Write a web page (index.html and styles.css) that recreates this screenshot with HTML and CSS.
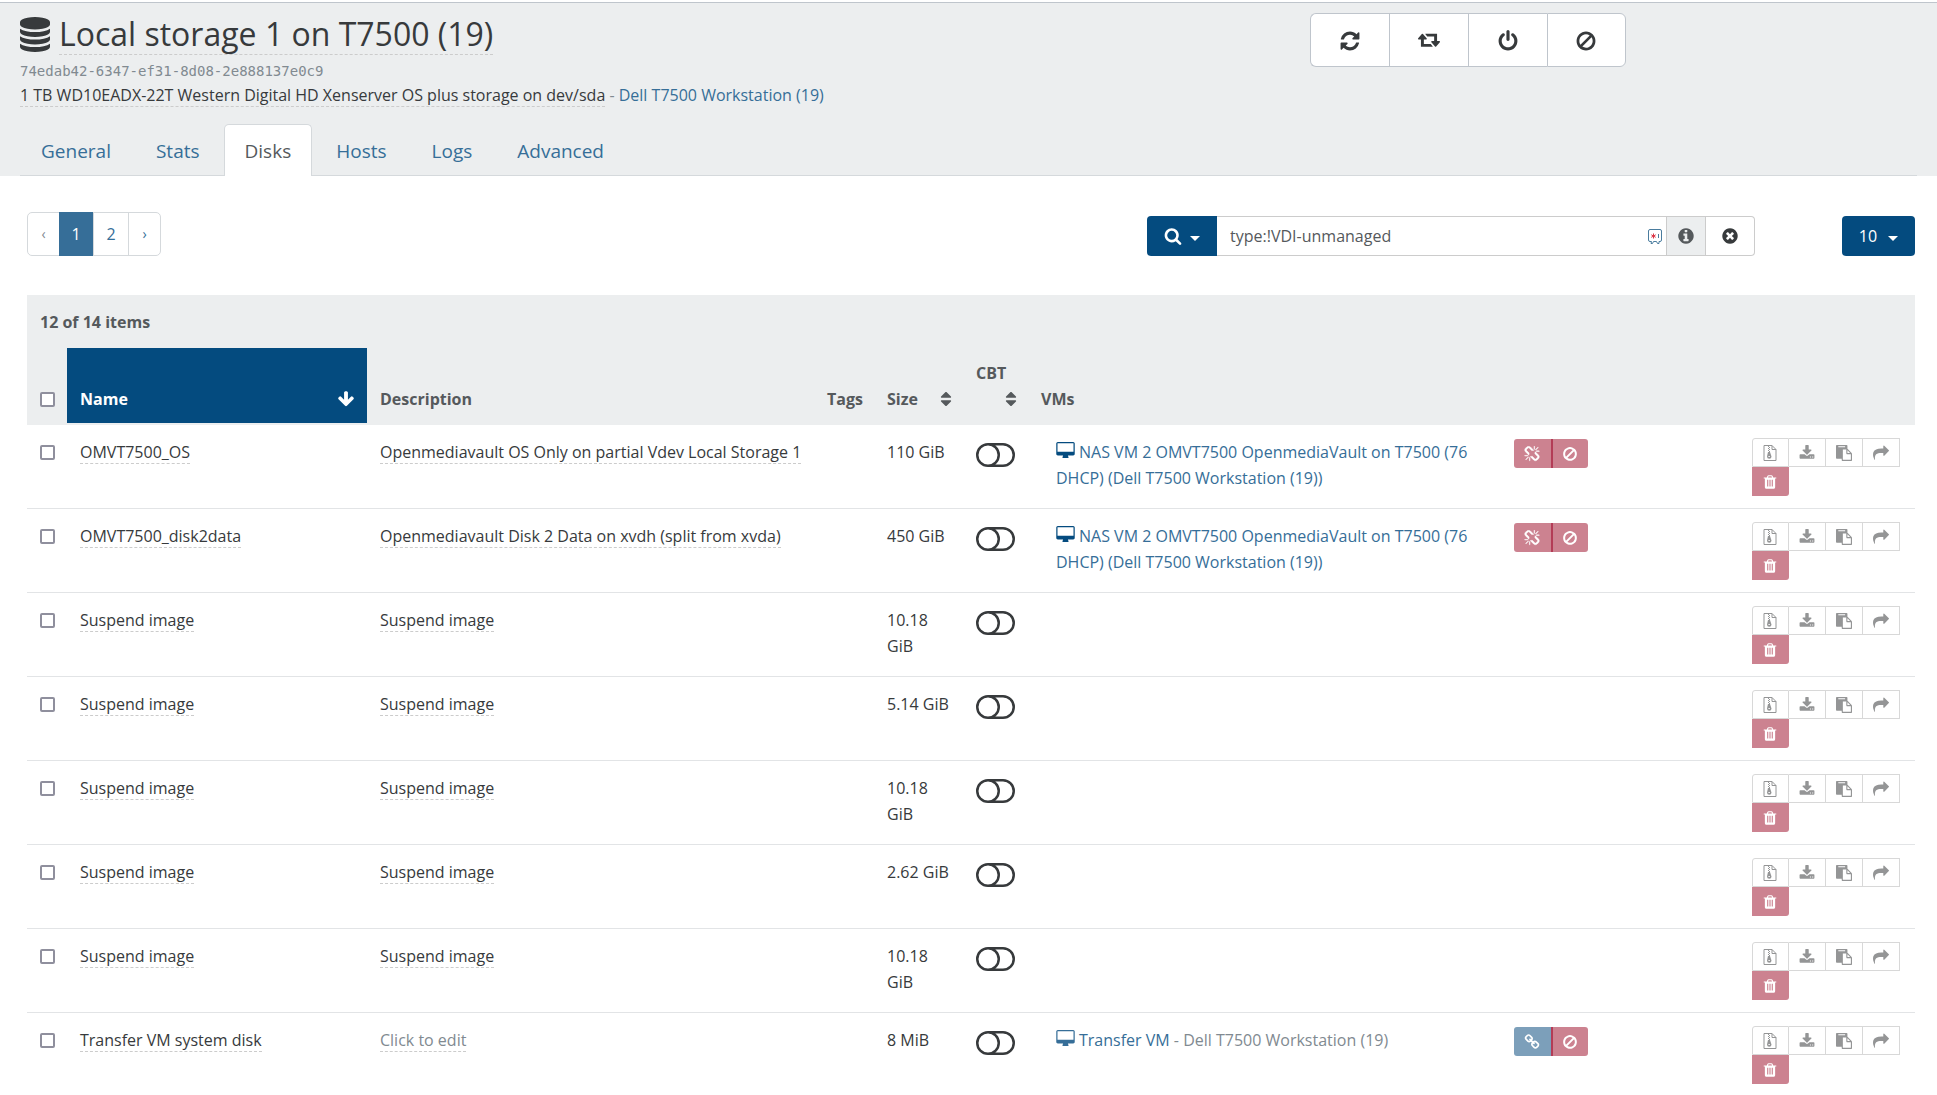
FILE: index.html
```
<!DOCTYPE html>
<html lang="en">
<head>
<meta charset="utf-8">
<meta name="viewport" content="width=device-width, initial-scale=1">
<title>Local storage 1 on T7500 (19)</title>
<link rel="stylesheet" href="styles.css">
</head>
<body>
<svg class="sprite" aria-hidden="true">
  <symbol id="database" viewBox="128 0 1536 1792"><path d="M896 768q237 0 443-43t325-127v170q0 69-103 128t-280 93.500-385 34.500-385-34.500-280-93.500-103-128v-170q119 84 325 127t443 43zm0 768q237 0 443-43t325-127v170q0 69-103 128t-280 93.500-385 34.500-385-34.500-280-93.500-103-128v-170q119 84 325 127t443 43zm0-384q237 0 443-43t325-127v170q0 69-103 128t-280 93.500-385 34.500-385-34.500-280-93.500-103-128v-170q119 84 325 127t443 43zm0-1152q208 0 385 34.500t280 93.500 103 128v128q0 69-103 128t-280 93.500-385 34.500-385-34.500-280-93.500-103-128v-128q0-69 103-128t280-93.500 385-34.500z"/></symbol>
  <symbol id="refresh" viewBox="0 0 1792 1792"><path d="M1639 1056q0 5-1 7-64 268-268 434.500t-478 166.500q-146 0-282.500-55t-243.500-157l-129 129q-19 19-45 19t-45-19-19-45v-448q0-26 19-45t45-19h448q26 0 45 19t19 45-19 45l-137 137q71 66 161 102t187 36q134 0 250-65t186-179q11-17 53-117 8-23 30-23h192q13 0 22.500 9.500t9.500 22.500zm25-800v448q0 26-19 45t-45 19h-448q-26 0-45-19t-19-45 19-45l138-138q-148-137-349-137-134 0-250 65t-186 179q-11 17-53 117-8 23-30 23h-199q-13 0-22.500-9.500t-9.500-22.500v-7q65-268 270-434.500t480-166.500q146 0 284 55.500t245 156.500l130-129q19-19 45-19t45 19 19 45z"/></symbol>
  <symbol id="retweet" viewBox="0 128 1920 1792"><path d="M1280 1504q0 13-9.500 22.500t-22.500 9.500h-960q-8 0-13.500-2t-9-7-5.500-8-3-11.500-1-11.500v-600h-192q-26 0-45-19t-19-45q0-24 15-41l320-384q19-22 49-22t49 22l320 384q15 17 15 41 0 26-19 45t-45 19h-192v384h576q16 0 25 11l160 192q7 10 7 21zm640-416q0 24-15 41l-320 384q-20 23-49 23t-49-23l-320-384q-15-17-15-41 0-26 19-45t45-19h192v-384h-576q-16 0-25-12l-160-192q-7-9-7-20 0-13 9.500-22.500t22.500-9.500h960q8 0 13.500 2t9 7 5.500 8 3 11.500 1 11.500v600h192q26 0 45 19t19 45z"/></symbol>
  <symbol id="power" viewBox="0 0 1792 1792"><path d="M1664 896q0 156-61 298t-164 245-245 164-298 61-298-61-245-164-164-245-61-298q0-182 80.500-343t226.500-270q43-32 95.500-25t83.500 50q32 42 24.500 94.500t-49.500 84.500q-98 74-151.500 181t-53.500 228q0 104 40.500 198.500t109.500 163.500 163.500 109.500 198.500 40.500 198.500-40.500 163.500-109.500 109.500-163.500 40.500-198.500q0-121-53.500-228t-151.500-181q-42-32-49.500-84.500t24.500-94.500q31-43 84-50t95 25q146 109 226.500 270t80.500 343zm-640-768v640q0 52-38 90t-90 38-90-38-38-90v-640q0-52 38-90t90-38 90 38 38 90z"/></symbol>
  <symbol id="ban" viewBox="0 0 1792 1792"><path d="M1440 893q0-161-87-295l-754 753q137 89 297 89 111 0 211.500-43.500t173.500-116.500 116-174.500 43-212.500zm-999 299l755-754q-135-91-300-91-148 0-273 73t-198 199-73 274q0 162 89 299zm1223-299q0 157-61 300t-163.500 246-245 164-298.500 61-298.500-61-245-164-163.500-246-61-300 61-299.500 163.500-245.500 245-164 298.500-61 298.500 61 245 164 163.500 245.500 61 299.500z"/></symbol>
  <symbol id="search" viewBox="0 0 1792 1792"><path d="M1216 832q0-185-131.500-316.500t-316.500-131.500-316.500 131.500-131.500 316.500 131.500 316.500 316.500 131.500 316.500-131.500 131.500-316.500zm512 832q0 52-38 90t-90 38q-54 0-90-38l-343-342q-179 124-399 124-143 0-273.500-55.500t-225-150-150-225-55.500-273.500 55.500-273.500 150-225 225-150 273.500-55.500 273.500 55.500 225 150 150 225 55.500 273.500q0 220-124 399l343 343q37 37 37 90z"/></symbol>
  <symbol id="info" viewBox="0 0 1792 1792"><path d="M1152 1376v-160q0-14-9-23t-23-9h-96v-512q0-14-9-23t-23-9h-320q-14 0-23 9t-9 23v160q0 14 9 23t23 9h96v320h-96q-14 0-23 9t-9 23v160q0 14 9 23t23 9h448q14 0 23-9t9-23zm-128-896v-160q0-14-9-23t-23-9h-192q-14 0-23 9t-9 23v160q0 14 9 23t23 9h192q14 0 23-9t9-23zm640 416q0 209-103 385.500t-279.500 279.500-385.500 103-385.500-103-279.500-279.500-103-385.500 103-385.500 279.500-279.500 385.500-103 385.500 103 279.500 279.500 103 385.500z"/></symbol>
  <symbol id="clear" viewBox="0 0 1792 1792"><path d="M1277 1122q0-26-19-45l-181-181 181-181q19-19 19-45 0-27-19-46l-90-90q-19-19-46-19-26 0-45 19l-181 181-181-181q-19-19-45-19-27 0-46 19l-90 90q-19 19-19 46 0 26 19 45l181 181-181 181q-19 19-19 45 0 27 19 46l90 90q19 19 46 19 26 0 45-19l181-181 181 181q19 19 45 19 27 0 46-19l90-90q19-19 19-46zm387-226q0 209-103 385.500t-279.500 279.500-385.500 103-385.500-103-279.500-279.500-103-385.500 103-385.500 279.500-279.500 385.500-103 385.500 103 279.500 279.500 103 385.500z"/></symbol>
  <symbol id="caret" viewBox="0 0 10 5"><path d="M0 0h10L5 5z"/></symbol>
  <symbol id="arrow-down" viewBox="0 0 1792 1792"><path d="M1675 832q0 53-37 90l-651 652q-39 37-91 37-53 0-90-37l-651-652q-38-36-38-90 0-53 38-91l74-75q39-37 91-37 53 0 90 37l294 294v-704q0-52 38-90t90-38h128q52 0 90 38t38 90v704l294-294q37-37 90-37 52 0 91 37l75 75q37 39 37 91z"/></symbol>
  <symbol id="sort" viewBox="0 0 1792 1792"><path d="M1408 1088q0 26-19 45l-448 448q-19 19-45 19t-45-19l-448-448q-19-19-19-45t19-45 45-19h896q26 0 45 19t19 45zm0-384q0 26-19 45t-45 19h-896q-26 0-45-19t-19-45 19-45l448-448q19-19 45-19t45 19l448 448q19 19 19 45z"/></symbol>
  <symbol id="desktop" viewBox="0 0 1920 1664"><path d="M1792 992v-832q0-13-9.500-22.500t-22.500-9.500h-1600q-13 0-22.500 9.500t-9.500 22.500v832q0 13 9.500 22.500t22.500 9.500h1600q13 0 22.500-9.500t9.500-22.500zm128-832v1088q0 66-47 113t-113 47h-544q0 37 16 77.500t32 71 16 43.500q0 26-19 45t-45 19h-512q-26 0-45-19t-19-45q0-14 16-44t32-70 16-78h-544q-66 0-113-47t-47-113v-1088q0-66 47-113t113-47h1600q66 0 113 47t47 113z"/></symbol>
  <symbol id="toggle" viewBox="0 0 39 24"><path d="M12 1.250h15a10.750 10.750 0 0 1 0 21.500H12a10.750 10.750 0 0 1 0-21.500a10.750 10.750 0 0 1 0 21.500" fill="none" stroke="currentColor" stroke-width="2.500"/></symbol>
  <symbol id="unlink" viewBox="0 0 1792 1792"><path d="M503 1271l-256 256q-10 9-23 9-12 0-23-9-9-10-9-23t9-23l256-256q10-9 23-9t23 9q9 10 9 23t-9 23zm169 41v320q0 14-9 23t-23 9-23-9-9-23v-320q0-14 9-23t23-9 23 9 9 23zm-224-224q0 14-9 23t-23 9h-320q-14 0-23-9t-9-23 9-23 23-9h320q14 0 23 9t9 23zm1264 128q0 120-85 203l-147 146q-83 83-203 83-121 0-204-85l-334-335q-21-21-42-56l239-18 273 274q28 28 68 28.500t68-27.500l147-146q28-28 28-67 0-40-28-68l-274-275 18-239q35 21 56 42l336 336q84 86 84 204zm-617-724l-239 18-273-274q-28-28-68-28-39 0-68 27l-147 146q-28 28-28 67 0 40 28 68l274 274-18 240q-35-21-56-42l-336-336q-84-86-84-204 0-120 85-203l147-146q83-83 203-83 121 0 204 85l334 335q21 21 42 56zm633 84q0 14-9 23t-23 9h-320q-14 0-23-9t-9-23 9-23 23-9h320q14 0 23 9t9 23zm-544-544v320q0 14-9 23t-23 9-23-9-9-23v-320q0-14 9-23t23-9 23 9 9 23zm407 151l-256 256q-11 9-23 9t-23-9q-9-10-9-23t9-23l256-256q10-9 23-9t23 9q9 10 9 23t-9 23z" stroke="currentColor" stroke-width="50"/></symbol>
  <symbol id="link" viewBox="0 0 1792 1792"><path d="M1520 1216q0-40-28-68l-208-208q-28-28-68-28-42 0-72 32 3 3 19 18.500t21.500 21.500 15 19 13 25.500 3.500 27.500q0 40-28 68t-68 28q-15 0-27.500-3.500t-25.500-13-19-15-21.500-21.500-18.500-19q-33 31-33 73 0 40 28 68l206 207q27 27 68 27 40 0 68-26l147-146q28-28 28-67zm-703-705q0-40-28-68l-206-207q-28-28-68-28-39 0-68 27l-147 146q-28 28-28 67 0 40 28 68l208 208q27 27 68 27 42 0 72-31-3-3-19-18.500t-21.500-21.500-15-19-13-25.500-3.500-27.500q0-40 28-68t68-28q15 0 27.500 3.500t25.500 13 19 15 21.500 21.500 18.500 19q33-31 33-73zm895 705q0 120-85 203l-147 146q-83 83-203 83-121 0-204-85l-206-207q-83-83-83-203 0-123 88-209l-88-88q-86 88-208 88-120 0-204-84l-208-208q-84-84-84-204t85-203l147-146q83-83 203-83 121 0 204 85l206 207q83 83 83 203 0 123-88 209l88 88q86-88 208-88 120 0 204 84l208 208q84 84 84 204z"/></symbol>
  <symbol id="archive" viewBox="0 0 14 16"><path d="M1 .5h8l4 4v11H1zM9 .5v4h4" fill="none" stroke="currentColor"/><path d="M5 1h1v1H5zM6 2h1v1H6zM5 3h1v1H5zM6 4h1v1H6zM5 5h1v1H5zM6 6h1v1H6zM5 7h2l1.500 4.500a2 2 0 0 1-4.500 0zM5.200 11a.8.8 0 1 0 1.900 0z" fill-rule="evenodd"/></symbol>
  <symbol id="download" viewBox="0 0 1792 1792"><path d="M1344 1344q0-26-19-45t-45-19-45 19-19 45 19 45 45 19 45-19 19-45zm256 0q0-26-19-45t-45-19-45 19-19 45 19 45 45 19 45-19 19-45zm128-224v320q0 40-28 68t-68 28h-1472q-40 0-68-28t-28-68v-320q0-40 28-68t68-28h465l135 136q58 56 136 56t136-56l136-136h464q40 0 68 28t28 68zm-325-569q17 41-14 70l-448 448q-18 19-45 19t-45-19l-448-448q-31-29-14-70 17-39 59-39h256v-448q0-26 19-45t45-19h256q26 0 45 19t19 45v448h256q42 0 59 39z"/></symbol>
  <symbol id="paste" viewBox="0 0 1792 1792"><path d="M768 1664h896v-640h-416q-40 0-68-28t-28-68v-416h-384v1152zm256-1440v-64q0-13-9.500-22.500t-22.500-9.500h-704q-13 0-22.500 9.500t-9.500 22.500v64q0 13 9.500 22.500t22.500 9.500h704q13 0 22.500-9.500t9.500-22.500zm256 672h299l-299-299v299zm512 128v672q0 40-28 68t-68 28h-960q-40 0-68-28t-28-68v-160h-544q-40 0-68-28t-28-68v-1344q0-40 28-68t68-28h1088q40 0 68 28t28 68v328q21 13 36 28l408 408q28 28 48 76t20 88z"/></symbol>
  <symbol id="share" viewBox="0 0 1792 1792"><path d="M1792 640q0 26-19 45l-512 512q-19 19-45 19t-45-19-19-45v-256h-224q-98 0-175.500 6t-154 21.500-133 42.500-105.500 69.500-80 101-48.500 138.500-17.500 181q0 55 5 123 0 6 2.500 23.500t2.500 26.500q0 15-8.500 25t-23.500 10q-16 0-28-17-7-9-13-22t-13.500-30-10.500-24q-127-285-127-451 0-199 53-333 162-403 875-403h224v-256q0-26 19-45t45-19 45 19l512 512q19 19 19 45z"/></symbol>
  <symbol id="trash" viewBox="0 0 1792 1792"><path d="M704 1376v-704q0-14-9-23t-23-9h-64q-14 0-23 9t-9 23v704q0 14 9 23t23 9h64q14 0 23-9t9-23zm256 0v-704q0-14-9-23t-23-9h-64q-14 0-23 9t-9 23v704q0 14 9 23t23 9h64q14 0 23-9t9-23zm256 0v-704q0-14-9-23t-23-9h-64q-14 0-23 9t-9 23v704q0 14 9 23t23 9h64q14 0 23-9t9-23zm-544-992h448l-48-117q-7-9-17-11h-317q-10 2-17 11zm928 32v64q0 14-9 23t-23 9h-96v948q0 83-47 143.500t-113 60.500h-832q-66 0-113-58.500t-47-141.500v-952h-96q-14 0-23-9t-9-23v-64q0-14 9-23t23-9h309l70-167q15-37 54-63t79-26h320q40 0 79 26t54 63l70 167h309q14 0 23 9t9 23z"/></symbol>
  <symbol id="vault" viewBox="0 0 14 15"><path d="M3.500 12.500H2A1.500 1.500 0 0 1 .5 11V2A1.500 1.500 0 0 1 2 .5h10A1.500 1.500 0 0 1 13.500 2v9a1.500 1.500 0 0 1-1.500 1.500h-1v2H9.500l-1-2h-3l-1 2H3zM10.500 5v4" fill="none" stroke="#4a7c9e"/><path d="M5.500 4.500v5M3.300 5.800l4.400 2.500M7.700 5.800L3.300 8.300" stroke="#dc3545"/></symbol>
</svg>

<header class="page-header">
  <div class="header-top">
    <div>
      <h1 class="title"><svg class="title-icon"><use href="#database"/></svg><span class="editable">Local storage 1 on T7500 (19)</span></h1>
      <p class="uuid">74edab42-6347-ef31-8d08-2e888137e0c9</p>
      <p class="summary"><span class="editable">1 TB WD10EADX-22T Western Digital HD Xenserver OS plus storage on dev/sda</span> <span class="muted">-</span> <a href="#host">Dell T7500 Workstation (19)</a></p>
    </div>
    <div class="toolbar">
      <button type="button" aria-label="Rescan"><svg class="icon-lg"><use href="#refresh"/></svg></button>
      <button type="button" aria-label="Reconnect"><svg class="icon-lg"><use href="#retweet"/></svg></button>
      <button type="button" aria-label="Disconnect"><svg class="icon-lg"><use href="#power"/></svg></button>
      <button type="button" aria-label="Forget"><svg class="icon-lg"><use href="#ban"/></svg></button>
    </div>
  </div>
  <nav class="tabs">
    <a href="#general">General</a>
    <a href="#stats">Stats</a>
    <a href="#disks" class="active" aria-current="page">Disks</a>
    <a href="#hosts">Hosts</a>
    <a href="#logs">Logs</a>
    <a href="#advanced">Advanced</a>
  </nav>
</header>

<main>
  <div class="controls">
    <nav class="pagination" aria-label="Pages">
      <a href="#prev" class="step disabled" aria-label="Previous">‹</a>
      <a href="#page1" class="current" aria-current="page">1</a>
      <a href="#page2">2</a>
      <a href="#next" class="step" aria-label="Next">›</a>
    </nav>
    <form class="filter">
      <button type="button" class="primary filter-menu" aria-label="Filters"><svg class="icon"><use href="#search"/></svg><svg class="caret"><use href="#caret"/></svg></button>
      <div class="filter-field">
        <input type="text" aria-label="Filter" value="type:!VDI-unmanaged">
        <svg class="vault"><use href="#vault"/></svg>
      </div>
      <button type="button" class="syntax" aria-label="Filter syntax"><svg class="icon"><use href="#info"/></svg></button>
      <button type="button" class="clear" aria-label="Clear filter"><svg class="icon"><use href="#clear"/></svg></button>
    </form>
    <button type="button" class="primary page-size">10<svg class="caret"><use href="#caret"/></svg></button>
  </div>

  <table class="disks">
    <colgroup><col class="c-check"><col class="c-name"><col class="c-desc"><col class="c-tags"><col class="c-size"><col class="c-cbt"><col><col class="c-actions"></colgroup>
    <thead>
      <tr class="count"><th colspan="8">12 of 14 items</th></tr>
      <tr class="columns">
        <th><input type="checkbox" aria-label="Select all"></th>
        <th class="sorted"><span class="head">Name<svg class="icon"><use href="#arrow-down"/></svg></span></th>
        <th>Description</th>
        <th>Tags</th>
        <th class="size"><span class="head">Size<svg class="icon"><use href="#sort"/></svg></span></th>
        <th class="cbt"><span class="head">CBT<svg class="icon"><use href="#sort"/></svg></span></th>
        <th>VMs</th>
        <th></th>
      </tr>
    </thead>
    <tbody>
      <tr>
        <td><input type="checkbox" aria-label="Select OMVT7500_OS"></td>
        <td><span class="editable">OMVT7500_OS</span></td>
        <td><span class="editable">Openmediavault OS Only on partial Vdev Local Storage 1</span></td>
        <td></td>
        <td>110 GiB</td>
        <td><button type="button" class="toggle" aria-label="CBT"><svg><use href="#toggle"/></svg></button></td>
        <td><div class="vm"><div><a href="#vm"><svg class="desktop running"><use href="#desktop"/></svg>NAS VM 2 OMVT7500 OpenmediaVault on T7500 (76 DHCP) (Dell T7500 Workstation (19))</a></div><div class="vm-actions"><button type="button" class="danger" aria-label="Disconnect" disabled><svg><use href="#unlink"/></svg></button><button type="button" class="danger" aria-label="Forget" disabled><svg><use href="#ban"/></svg></button></div></div></td>
        <td><div class="actions"><button type="button" aria-label="Export"><svg><use href="#archive"/></svg></button><button type="button" aria-label="Import"><svg><use href="#download"/></svg></button><button type="button" aria-label="Copy"><svg><use href="#paste"/></svg></button><button type="button" aria-label="Migrate"><svg><use href="#share"/></svg></button><button type="button" class="danger" aria-label="Delete"><svg><use href="#trash"/></svg></button></div></td>
      </tr>
      <tr>
        <td><input type="checkbox" aria-label="Select OMVT7500_disk2data"></td>
        <td><span class="editable">OMVT7500_disk2data</span></td>
        <td><span class="editable">Openmediavault Disk 2 Data on xvdh (split from xvda)</span></td>
        <td></td>
        <td>450 GiB</td>
        <td><button type="button" class="toggle" aria-label="CBT"><svg><use href="#toggle"/></svg></button></td>
        <td><div class="vm"><div><a href="#vm"><svg class="desktop running"><use href="#desktop"/></svg>NAS VM 2 OMVT7500 OpenmediaVault on T7500 (76 DHCP) (Dell T7500 Workstation (19))</a></div><div class="vm-actions"><button type="button" class="danger" aria-label="Disconnect" disabled><svg><use href="#unlink"/></svg></button><button type="button" class="danger" aria-label="Forget" disabled><svg><use href="#ban"/></svg></button></div></div></td>
        <td><div class="actions"><button type="button" aria-label="Export"><svg><use href="#archive"/></svg></button><button type="button" aria-label="Import"><svg><use href="#download"/></svg></button><button type="button" aria-label="Copy"><svg><use href="#paste"/></svg></button><button type="button" aria-label="Migrate"><svg><use href="#share"/></svg></button><button type="button" class="danger" aria-label="Delete"><svg><use href="#trash"/></svg></button></div></td>
      </tr>
      <tr>
        <td><input type="checkbox" aria-label="Select Suspend image"></td>
        <td><span class="editable">Suspend image</span></td>
        <td><span class="editable">Suspend image</span></td>
        <td></td>
        <td>10.18 GiB</td>
        <td><button type="button" class="toggle" aria-label="CBT"><svg><use href="#toggle"/></svg></button></td>
        <td></td>
        <td><div class="actions"><button type="button" aria-label="Export"><svg><use href="#archive"/></svg></button><button type="button" aria-label="Import"><svg><use href="#download"/></svg></button><button type="button" aria-label="Copy"><svg><use href="#paste"/></svg></button><button type="button" aria-label="Migrate"><svg><use href="#share"/></svg></button><button type="button" class="danger" aria-label="Delete"><svg><use href="#trash"/></svg></button></div></td>
      </tr>
      <tr>
        <td><input type="checkbox" aria-label="Select Suspend image"></td>
        <td><span class="editable">Suspend image</span></td>
        <td><span class="editable">Suspend image</span></td>
        <td></td>
        <td>5.14 GiB</td>
        <td><button type="button" class="toggle" aria-label="CBT"><svg><use href="#toggle"/></svg></button></td>
        <td></td>
        <td><div class="actions"><button type="button" aria-label="Export"><svg><use href="#archive"/></svg></button><button type="button" aria-label="Import"><svg><use href="#download"/></svg></button><button type="button" aria-label="Copy"><svg><use href="#paste"/></svg></button><button type="button" aria-label="Migrate"><svg><use href="#share"/></svg></button><button type="button" class="danger" aria-label="Delete"><svg><use href="#trash"/></svg></button></div></td>
      </tr>
      <tr>
        <td><input type="checkbox" aria-label="Select Suspend image"></td>
        <td><span class="editable">Suspend image</span></td>
        <td><span class="editable">Suspend image</span></td>
        <td></td>
        <td>10.18 GiB</td>
        <td><button type="button" class="toggle" aria-label="CBT"><svg><use href="#toggle"/></svg></button></td>
        <td></td>
        <td><div class="actions"><button type="button" aria-label="Export"><svg><use href="#archive"/></svg></button><button type="button" aria-label="Import"><svg><use href="#download"/></svg></button><button type="button" aria-label="Copy"><svg><use href="#paste"/></svg></button><button type="button" aria-label="Migrate"><svg><use href="#share"/></svg></button><button type="button" class="danger" aria-label="Delete"><svg><use href="#trash"/></svg></button></div></td>
      </tr>
      <tr>
        <td><input type="checkbox" aria-label="Select Suspend image"></td>
        <td><span class="editable">Suspend image</span></td>
        <td><span class="editable">Suspend image</span></td>
        <td></td>
        <td>2.62 GiB</td>
        <td><button type="button" class="toggle" aria-label="CBT"><svg><use href="#toggle"/></svg></button></td>
        <td></td>
        <td><div class="actions"><button type="button" aria-label="Export"><svg><use href="#archive"/></svg></button><button type="button" aria-label="Import"><svg><use href="#download"/></svg></button><button type="button" aria-label="Copy"><svg><use href="#paste"/></svg></button><button type="button" aria-label="Migrate"><svg><use href="#share"/></svg></button><button type="button" class="danger" aria-label="Delete"><svg><use href="#trash"/></svg></button></div></td>
      </tr>
      <tr>
        <td><input type="checkbox" aria-label="Select Suspend image"></td>
        <td><span class="editable">Suspend image</span></td>
        <td><span class="editable">Suspend image</span></td>
        <td></td>
        <td>10.18 GiB</td>
        <td><button type="button" class="toggle" aria-label="CBT"><svg><use href="#toggle"/></svg></button></td>
        <td></td>
        <td><div class="actions"><button type="button" aria-label="Export"><svg><use href="#archive"/></svg></button><button type="button" aria-label="Import"><svg><use href="#download"/></svg></button><button type="button" aria-label="Copy"><svg><use href="#paste"/></svg></button><button type="button" aria-label="Migrate"><svg><use href="#share"/></svg></button><button type="button" class="danger" aria-label="Delete"><svg><use href="#trash"/></svg></button></div></td>
      </tr>
      <tr>
        <td><input type="checkbox" aria-label="Select Transfer VM system disk"></td>
        <td><span class="editable">Transfer VM system disk</span></td>
        <td><span class="editable muted">Click to edit</span></td>
        <td></td>
        <td>8 MiB</td>
        <td><button type="button" class="toggle" aria-label="CBT"><svg><use href="#toggle"/></svg></button></td>
        <td><div class="vm"><div><a href="#vm"><svg class="desktop"><use href="#desktop"/></svg>Transfer VM</a> <span class="muted">- Dell T7500 Workstation (19)</span></div><div class="vm-actions"><button type="button" class="connect" aria-label="Connect" disabled><svg><use href="#link"/></svg></button><button type="button" class="danger" aria-label="Forget" disabled><svg><use href="#ban"/></svg></button></div></div></td>
        <td><div class="actions"><button type="button" aria-label="Export"><svg><use href="#archive"/></svg></button><button type="button" aria-label="Import"><svg><use href="#download"/></svg></button><button type="button" aria-label="Copy"><svg><use href="#paste"/></svg></button><button type="button" aria-label="Migrate"><svg><use href="#share"/></svg></button><button type="button" class="danger" aria-label="Delete"><svg><use href="#trash"/></svg></button></div></td>
      </tr>
    </tbody>
  </table>
</main>
</body>
</html>
```
FILE: styles.css
```
*, *::before, *::after { box-sizing: border-box; }

body {
  margin: 0;
  padding-top: 2px;
  background: #fff;
  color: #373a3c;
  font: 16px/26px "Segoe UI", "Open Sans", "Noto Sans", sans-serif;
}

.sprite { display: none; }
svg { fill: currentColor; }
a { color: #366e98; text-decoration: none; }
button, input { margin: 0; font: inherit; color: inherit; }
button {
  display: flex;
  align-items: center;
  justify-content: center;
  padding: 0;
  border: 0;
  background: none;
}

.muted { color: #818a91; }
.editable { border-bottom: 1px dashed #ccc; }
.icon { width: 18px; height: 18px; }
.icon-lg { width: 22px; height: 22px; }
.caret { width: 10px; height: 5px; margin-top: 5px; }

/* Header */
.page-header {
  padding: 10px 20px 0;
  border-top: 1px solid #bfc5cc;
  background: #eceeef;
}
.header-top {
  display: grid;
  grid-template-columns: 68% 1fr;
  align-items: start;
}
.title {
  display: flex;
  align-items: center;
  gap: 9px;
  margin: 0 0 6px;
  font-size: 32px;
  font-weight: 400;
  line-height: 41px;
}
.title-icon { width: 30px; height: 35px; }
.uuid {
  margin: 0;
  color: #818a91;
  font: 14px/20px "DejaVu Sans Mono", monospace;
}
.summary { margin: 1px 0 0; }
.toolbar {
  display: grid;
  grid-template-columns: repeat(4, 79px);
  justify-content: start;
}
.toolbar button {
  height: 54px;
  padding-top: 2px;
  border: 1px solid #bfc5cc;
  border-right-width: 0;
  background: #fff;
}
.toolbar button:first-child { border-radius: 6px 0 0 6px; }
.toolbar button:last-child { border-radius: 0 6px 6px 0; border-right-width: 1px; }

.tabs {
  display: flex;
  gap: 3px;
  margin-top: 16px;
  border-bottom: 1px solid #d5d9dc;
}
.tabs a {
  margin-bottom: -1px;
  padding: 12px 20px 11px;
  border: 1px solid transparent;
  border-bottom: 0;
  border-radius: 5px 5px 0 0;
  font-size: 19px;
  line-height: 28px;
}
.tabs .active {
  border-color: #d5d9dc;
  background: #fff;
  color: #55595c;
}

/* Pagination and filter */
main { padding: 36px 22px 0 27px; }
.controls {
  display: flex;
  align-items: flex-end;
  margin-bottom: 39px;
}
.pagination {
  display: flex;
  margin-right: auto;
  border: 1px solid #d5d9dc;
  border-radius: 5px;
}
.pagination a {
  width: 35px;
  margin: -1px 0;
  padding: 10px 0;
  border-right: 1px solid #d5d9dc;
  line-height: 24px;
  text-align: center;
}
.pagination .step { width: 31px; font-size: 14px; }
.pagination .disabled { color: #818a91; }
.pagination a:first-child, .pagination a:last-child { border-right: 0; }
.pagination .current { background: #366e98; color: #fff; }

.filter { display: flex; width: 608px; height: 40px; margin-right: 87px; }
.primary { height: 40px; border-radius: 4px; background: #044b7f; color: #fff; }
.filter-menu { width: 70px; gap: 8px; border-radius: 4px 0 0 4px; }
.filter-field {
  display: flex;
  flex: 1;
  align-items: center;
  min-width: 0;
  padding: 0 4px 0 13px;
  border: 1px solid #ccc;
  border-width: 1px 0;
  color: #55595c;
}
.filter-field input {
  flex: 1;
  min-width: 0;
  padding: 0;
  border: 0;
  outline: 0;
  background: none;
}
.vault { width: 14px; height: 15px; }
.syntax { width: 40px; border: 1px solid #ccc; background: #eceeef; color: #55595c; }
.clear { width: 49px; border: 1px solid #ccc; border-left: 0; border-radius: 0 4px 4px 0; }
.page-size { width: 73px; gap: 11px; }

/* Disk table */
.disks {
  width: 100%;
  table-layout: fixed;
  border-collapse: collapse;
}
.c-check { width: 40px; }
.c-name { width: 300px; }
.c-desc { width: 447px; }
.c-tags { width: 60px; }
.c-size { width: 89px; }
.c-cbt { width: 65px; }
.c-actions { width: 176px; }

thead { border-bottom: 2px solid #eceeef; background: #eceeef; color: #55595c; }
th { text-align: left; vertical-align: bottom; }
.count th { padding: 14px 13px 13px; }
.columns th { height: 76px; padding: 12px 12px 11px 13px; white-space: nowrap; }
.columns .sorted { background: #044b7f; color: #fff; }
.columns .size, .columns .cbt { padding-right: 8px; }
.head { display: flex; align-items: center; justify-content: space-between; }
.cbt .head { flex-direction: column; align-items: flex-start; }
.cbt .icon { height: 26px; align-self: flex-end; }

td { padding: 14px 12px 11px 13px; vertical-align: top; }
td:last-child { padding: 13px 12px 12px 13px; }
tbody tr { border-bottom: 1px solid #e2e4e6; }
tbody tr:last-child { border-bottom: 0; }
tbody tr:last-child td { padding-bottom: 8px; }

input[type="checkbox"] {
  display: block;
  width: 15px;
  height: 15px;
  margin: 6px 0 5px;
  border: 2px solid #8f8f9d;
  border-radius: 2px;
  background: #fff;
  appearance: none;
}
.toggle { margin-top: 4px; }
.toggle svg { width: 39px; height: 24px; }

.vm {
  display: grid;
  grid-template-columns: 1fr 74px;
  gap: 30px;
  padding: 0 139px 0 15px;
}
.desktop { width: 19px; height: 16px; margin-right: 4px; }
.running { color: #044b7f; }
.vm-actions, .actions { display: flex; align-items: flex-start; }
.vm-actions button, .actions button { width: 37px; height: 29px; }
.vm-actions svg, .actions svg { width: 16px; height: 16px; }
.vm-actions button + button { border-left: 2px solid #b33c56; border-radius: 0 3px 3px 0; }
.vm-actions button:first-child { border-radius: 3px 0 0 3px; }
.vm-actions .connect { background: #7c9fba; color: #fff; }

.actions { flex-wrap: wrap; }
.actions button {
  border: 1px solid #d8d8d8;
  border-left-width: 0;
  color: #949596;
}
.actions button:first-child { border-left-width: 1px; border-radius: 3px 0 0 0; }
.vm-actions .danger, .actions .danger { background: #cc8290; color: #fff; }
.actions .danger { border: 0; border-radius: 0 0 3px 0; }
```
